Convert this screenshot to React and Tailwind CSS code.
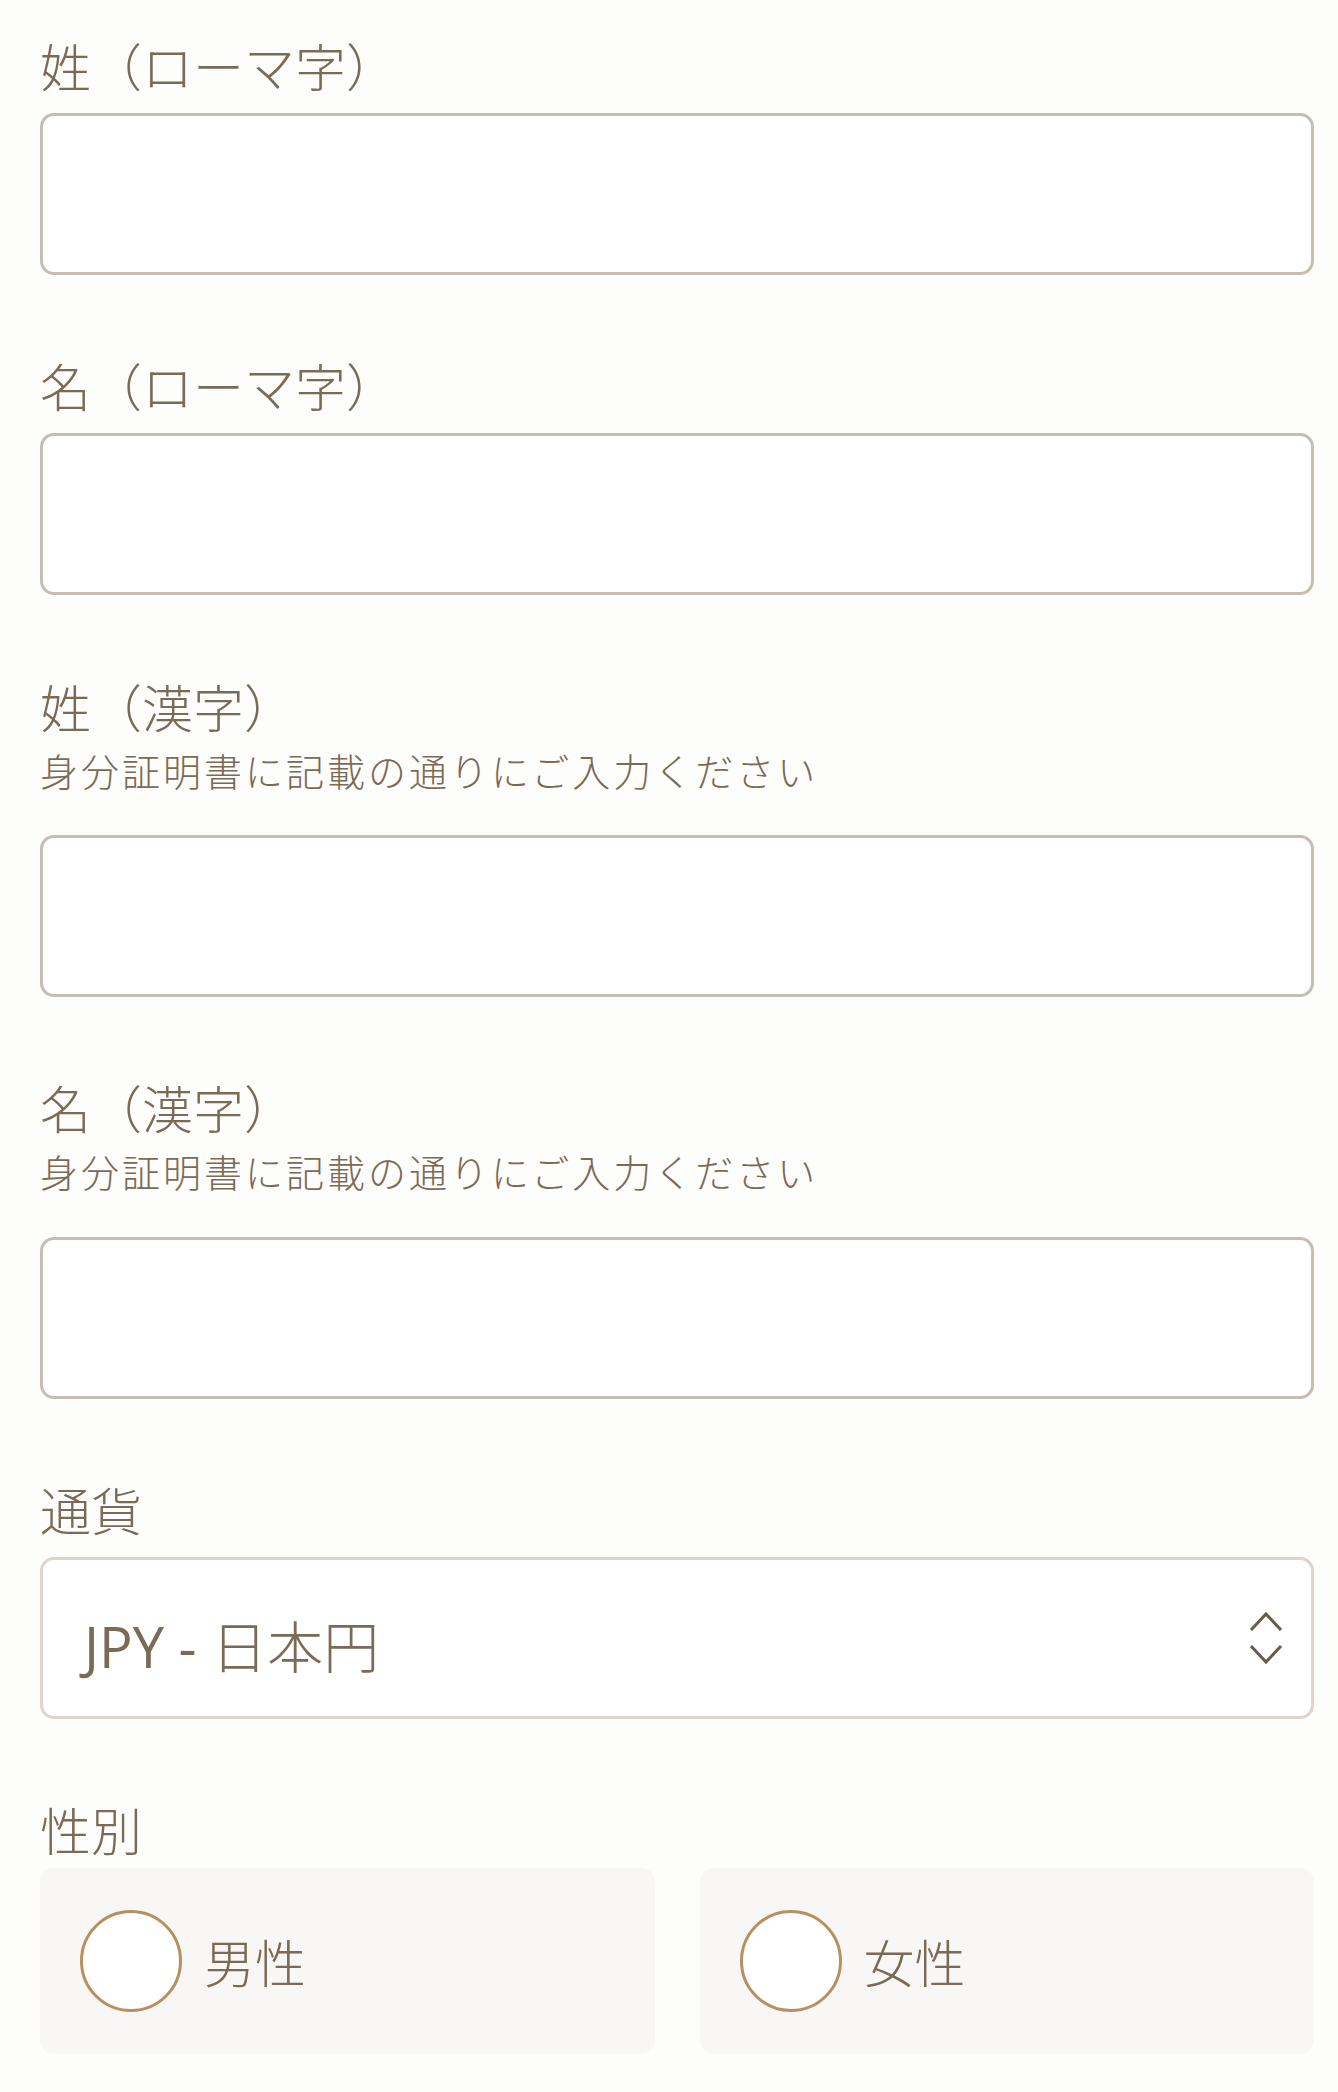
export default function App() {
  const label =
    "text-[51px] leading-[60px] font-light text-[#7a6a56] [font-family:'Noto_Sans_CJK_JP','Noto_Sans',sans-serif]";
  const sub =
    "mt-[12px] text-[38px] leading-[44px] font-light tracking-[3px] text-[#7a6a56] [font-family:'Noto_Sans_CJK_JP','Noto_Sans',sans-serif]";
  const input =
    "h-[162px] w-full rounded-[14px] border-[3px] border-[#c6bdb5] bg-white";
  return (
    <div className="min-h-[2092px] w-full bg-[#fdfdfc] pl-[40px] pr-[24px] pt-[35px]">
      <div className="flex flex-col">
        <div>
          <div className={label}>姓（ローマ字）</div>
          <div className={"mt-[18px] " + input}></div>
        </div>
        <div className="mt-[80px]">
          <div className={label}>名（ローマ字）</div>
          <div className={"mt-[18px] " + input}></div>
        </div>
        <div className="mt-[81px]">
          <div className={label}>姓（漢字）</div>
          <div className={sub}>身分証明書に記載の通りにご入力ください</div>
          <div className={"mt-[43px] " + input}></div>
        </div>
        <div className="mt-[80px]">
          <div className={label}>名（漢字）</div>
          <div className={sub}>身分証明書に記載の通りにご入力ください</div>
          <div className={"mt-[44px] " + input}></div>
        </div>
        <div className="mt-[80px]">
          <div className={label}>通貨</div>
          <div className="mt-[18px] flex h-[162px] w-full items-center justify-between rounded-[14px] border-[3px] border-[#ddd5cd] bg-white pl-[41px] pr-[28px]">
            <span className="pt-[16px] text-[56px] leading-[60px] text-[#7a6a56] [font-family:'Open_Sans','Noto_Sans_CJK_JP',sans-serif]">
              JPY - <span className="font-light">日本円</span>
            </span>
            <svg width="34" height="60" viewBox="0 0 34 60" fill="none" stroke="#6b5a46" strokeWidth="3">
              <path d="M2 22 L17 6 L32 22" />
              <path d="M2 38 L17 54 L32 38" />
            </svg>
          </div>
        </div>
        <div className="mt-[80px]">
          <div className={label}>性別</div>
          <div className="mt-[9px] grid grid-cols-2 gap-[45px]">
            {["男性", "女性"].map((t) => (
              <div
                key={t}
                className="flex h-[186px] items-center rounded-[14px] bg-[#f8f7f5] pl-[40px]"
              >
                <div className="h-[102px] w-[102px] rounded-full border-[3px] border-[#b88f5e] bg-white"></div>
                <span className="ml-[22px] text-[51px] leading-[60px] font-light text-[#7a6a56] [font-family:'Noto_Sans_CJK_JP','Noto_Sans',sans-serif]">
                  {t}
                </span>
              </div>
            ))}
          </div>
        </div>
      </div>
    </div>
  );
}
